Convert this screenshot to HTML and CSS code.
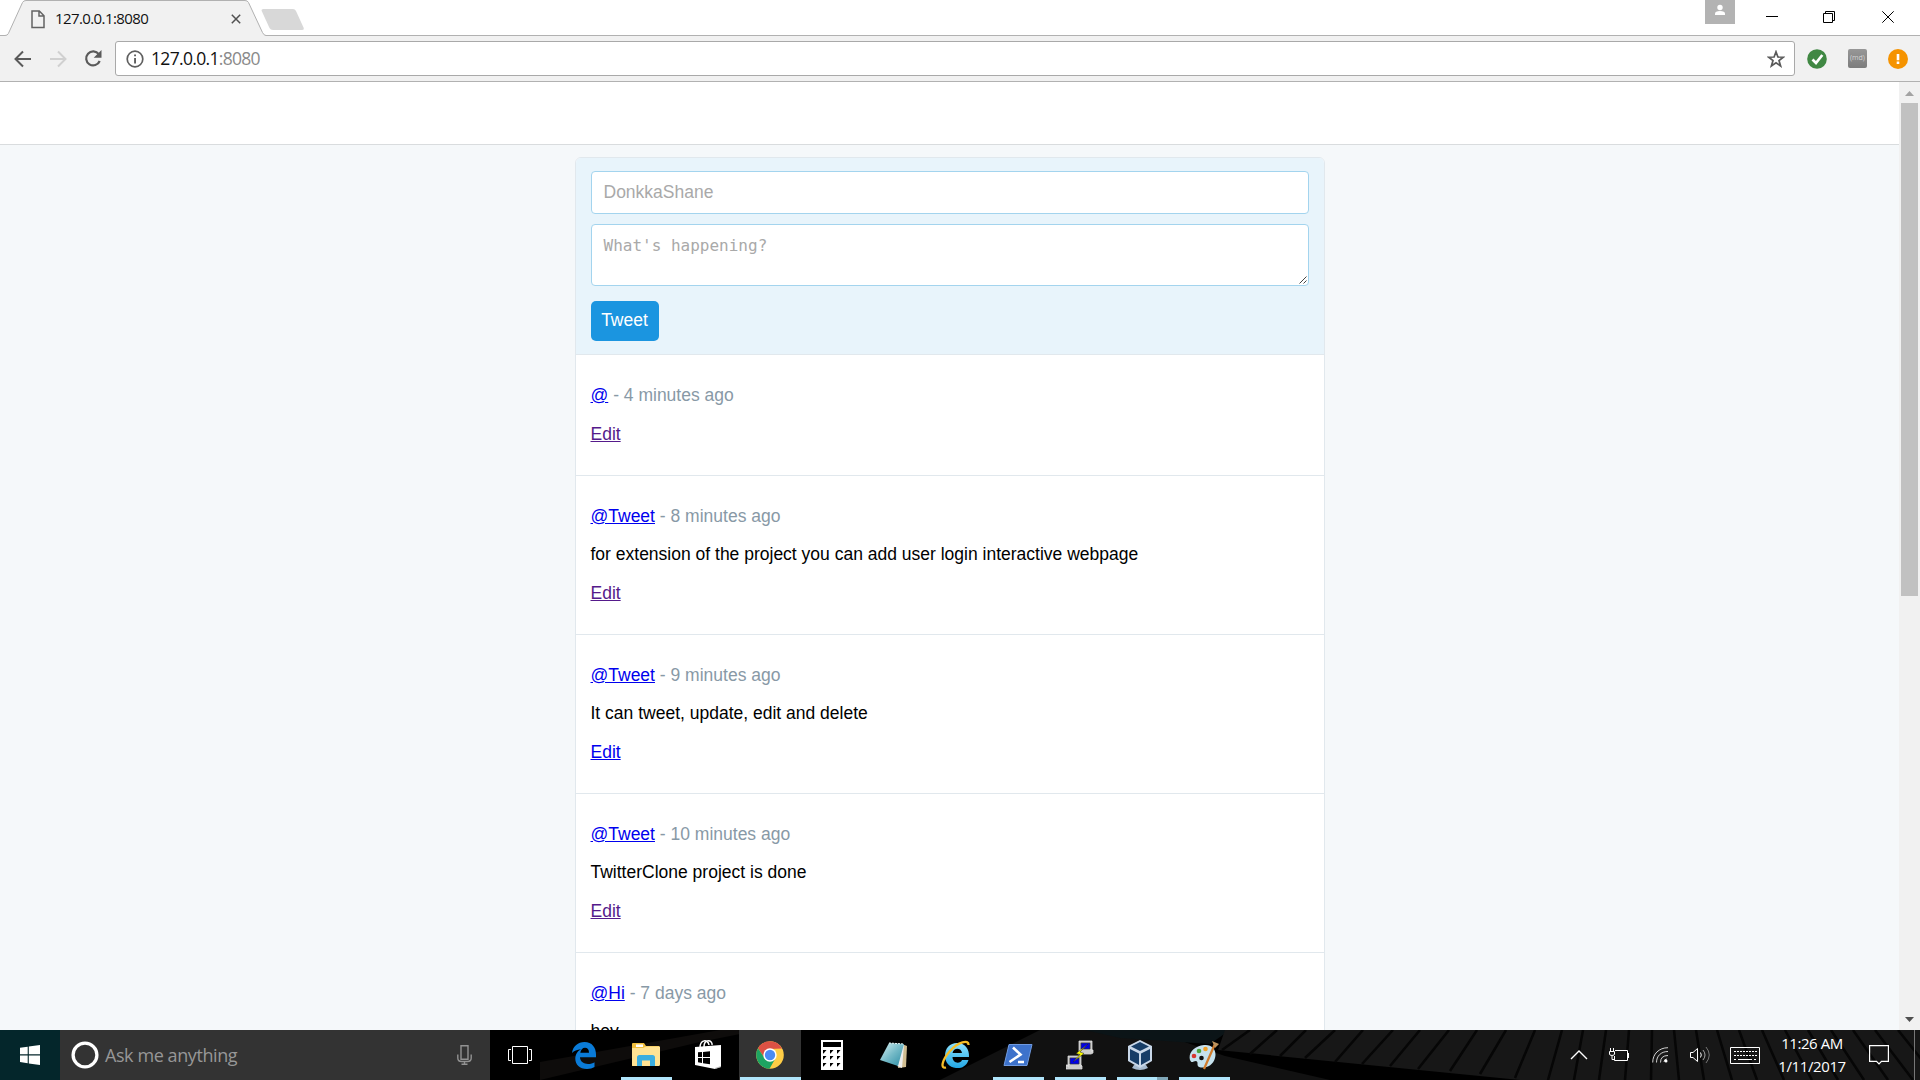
FILE: index.html
```html
<!DOCTYPE html>
<html lang="en">
<head>
<meta charset="utf-8">
<title>127.0.0.1:8080</title>
<link rel="stylesheet" href="styles.css">
</head>
<body>
<div class="screen">
  <header class="tabstrip">
    <div class="tab">
      <svg class="tab-shape" width="312" height="36" viewBox="0 0 312 36">
        <path d="M0 36V35.5H5Q7.5 35.5 8.4 33.5L22.5 2.5Q23.5.5 26 .5H245Q247.500 .5 248.500 2.500L262.500 32.500Q264 35.500 266 35.500V36Z" fill="#f1f1f1"/>
        <path d="M0 35.500H5Q7.500 35.500 8.400 33.500L22.500 2.500Q23.500.5 26 .5H245Q247.500.5 248.500 2.500L262.500 32.500Q264 35.500 266 35.500H312" fill="none" stroke="#b1b1b1"/>
        <path d="M263.500 9H293Q295 9 296 11L303.500 27.500Q304.500 30 302 30H273Q270.500 30 269.500 28L261.700 11Q261 9 263.500 9Z" fill="#d8d8d8"/>
      </svg>
      <svg class="tab-file" width="14" height="19" viewBox="0 0 14 19" fill="none" stroke="#636363" stroke-width="1.500"><path d="M1 1H8.300L13 5.700V17.500H1ZM8 1V6H13"/></svg>
      <span class="tab-title">127.0.0.1:8080</span>
      <svg class="tab-close" width="10" height="10" viewBox="0 0 10 10" stroke="#505050" stroke-width="1.500"><path d="M.8.8 9.200 9.200M9.200.8.8 9.200"/></svg>
    </div>
    <div class="window-buttons">
      <svg class="profile" width="30" height="24" viewBox="0 0 30 24"><path fill="#b3b3b3" d="M0 0H30V24H0Z"/><circle cx="15" cy="7.500" r="2.700" fill="#fff"/><path fill="#fff" d="M10 15V13.500Q10 11 15 11T20 13.500V15Z"/></svg>
      <svg width="12" height="12" viewBox="0 0 12 12"><path d="M0 5.500H12" stroke="#000"/></svg>
      <svg width="12" height="12" viewBox="0 0 12 12" fill="none" stroke="#000"><path d="M.5 2.500H9.500V11.500H.5ZM2.500 2.500V.5H11.500V9.500H9.500"/></svg>
      <svg width="12" height="12" viewBox="0 0 12 12" stroke="#000"><path d="M.3.3 11.700 11.700M11.700.3.3 11.700"/></svg>
    </div>
  </header>

  <div class="toolbar">
    <div class="nav">
      <svg width="18" height="18" viewBox="0 0 18 18" fill="none" stroke="#5a5a5a" stroke-width="2"><path d="M17 9H2M9 1.500 1.500 9 9 16.500"/></svg>
      <svg width="18" height="18" viewBox="0 0 18 18" fill="none" stroke="#d0d0d0" stroke-width="2"><path d="M1 9H16M9 1.500 16.500 9 9 16.500"/></svg>
      <svg width="18" height="18" viewBox="0 0 18 18"><path d="M14.800 4.200A7 7 0 1 0 15.700 11" fill="none" stroke="#5a5a5a" stroke-width="2.200"/><path d="M17.500 0V7.800H9.700Z" fill="#5a5a5a"/></svg>
    </div>
    <div class="omnibox">
      <svg width="18" height="18" viewBox="0 0 18 18"><circle cx="9" cy="9" r="7.800" fill="none" stroke="#5f5f5f" stroke-width="1.700"/><path d="M8.100 4.500H10V6.300H8.100ZM8.100 8H10V13.400H8.100Z" fill="#5f5f5f"/></svg>
      <span class="url">127.0.0.1<span class="port">:8080</span></span>
      <svg class="star" width="18" height="18" viewBox="0 0 18 18"><path d="M9 1.800 10.900 7 16.300 7.200 12 10.500 13.600 15.900 9 12.700 4.400 15.900 6 10.500 1.700 7.200 7.100 7Z" fill="none" stroke="#5a5a5a" stroke-width="1.700"/></svg>
    </div>
    <div class="extensions">
      <svg width="20" height="20" viewBox="0 0 20 20"><circle cx="10" cy="10" r="9.800" fill="#408843"/><path d="M5.500 10.500 9 14 15.300 6" fill="none" stroke="#fff" stroke-width="2.700"/></svg>
      <span class="md-badge">(md)</span>
      <svg width="20" height="20" viewBox="0 0 20 20"><circle cx="10" cy="10" r="10" fill="#f59300"/><path d="M8.700 5H11.300V11.300H8.700ZM8.700 12.600H11.300V15H8.700Z" fill="#fff"/></svg>
    </div>
  </div>

  <div class="viewport">
    <main class="page">
      <div class="navbar"></div>
      <section class="feed">
        <form class="compose">
          <input class="field" type="text" placeholder="DonkkaShane">
          <div class="message">
            <textarea class="field" placeholder="What's happening?"></textarea>
            <svg class="grip" width="8" height="8" viewBox="0 0 8 8" stroke="#444" stroke-width="1"><path d="M.5 7.500 7.500.5M4.500 7.500 7.500 4.500"/></svg>
          </div>
          <button class="send" type="button">Tweet</button>
        </form>
        <article class="tweet">
          <p class="meta"><a href="#user">@</a> - 4 minutes ago</p>
          <p class="actions"><a class="seen" href="#edit">Edit</a></p>
        </article>
        <article class="tweet">
          <p class="meta"><a href="#user">@Tweet</a> - 8 minutes ago</p>
          <p>for extension of the project you can add user login interactive webpage</p>
          <p class="actions"><a class="seen" href="#edit">Edit</a></p>
        </article>
        <article class="tweet">
          <p class="meta"><a href="#user">@Tweet</a> - 9 minutes ago</p>
          <p>It can tweet, update, edit and delete</p>
          <p class="actions"><a href="#edit">Edit</a></p>
        </article>
        <article class="tweet">
          <p class="meta"><a href="#user">@Tweet</a> - 10 minutes ago</p>
          <p>TwitterClone project is done</p>
          <p class="actions"><a class="seen" href="#edit">Edit</a></p>
        </article>
        <article class="tweet">
          <p class="meta"><a href="#user">@Hi</a> - 7 days ago</p>
          <p>hey</p>
        </article>
      </section>
    </main>
    <div class="scrollbar">
      <svg width="9" height="5" viewBox="0 0 9 5"><path d="M0 5 4.500 0 9 5Z" fill="#a3a3a3"/></svg>
      <div class="thumb"></div>
      <svg width="9" height="5" viewBox="0 0 9 5"><path d="M0 0H9L4.500 5Z" fill="#505050"/></svg>
    </div>
  </div>

  <footer class="taskbar">
    <svg class="wood" width="1430" height="50" viewBox="490 0 1430 50">
      <path fill="#000" d="M490 0H1920V50H490Z"/>
      <path fill="#0e0c0b" d="M540 32 720 0H760L700 12 540 50Z"/>
      <path fill="#111" d="M940 50 1040 0H1150L1225 26 1330 50Z"/>
      <path fill="#0b1417" d="M1085 0H1230L1210 14 1120 8Z"/>
      <path fill="#171717" d="M1225 0H1920V50H1520L1218 20Z"/>
      <path fill="none" stroke="#060606" stroke-width="2.500" d="M1250 0 1222 20M1277 0 1250 24M1306 0 1280 26M1335 0 1305 28M1363 0 1335 32M1393 0 1362 34M1420 0 1390 36M1449 0 1418 39M1477 0 1450 41M1506 0 1480 44M1535 0 1515 48M1562 0 1548 50M1583 0 1574 50M1606 0 1599 50M1629 0 1625 50M1652 0 1651 50M1674 0 1679 50M1696 0 1704 50M1717 0 1732 50M1739 0 1757 50M1762 0 1784 50M1785 0 1812 50M1808 0 1838 50M1831 0 1864 50M1853 0 1888 50M1875 0 1913 50M1898 0 1938 50"/>
    </svg>
    <div class="start"><svg width="20" height="20" viewBox="0 0 20 20" fill="#fff"><path d="M0 2.800 7.700 1.700V9.200H0ZM8.800 1.500 20 0V9.200H8.800ZM0 10.400H7.700V18.200L0 17ZM8.800 10.400H20V20L8.800 18.400Z"/></svg></div>
    <div class="search">
      <svg width="28" height="28" viewBox="0 0 28 28"><circle cx="14" cy="14" r="11.900" fill="none" stroke="#fff" stroke-width="3.300"/></svg>
      <span class="search-text">Ask me anything</span>
      <svg width="15" height="20" viewBox="0 0 15 20" fill="none" stroke="#929292" stroke-width="1.400"><path d="M4 .7H11V14.300H4ZM.8 9.500V13Q.8 16.500 4.500 16.500H10.500Q14.200 16.500 14.200 13V9.500M7.500 16.500V19.300M4.500 19.300H10.500"/></svg>
    </div>
    <div class="apps">
      <div class="app task-view"><svg width="26" height="20" viewBox="0 0 26 20" fill="none" stroke="#fff"><path d="M5.500 1.500H20.500V18.500H5.500ZM4 4.500H1.500V15.500H4M22 4.500H24.500V15.500H22"/></svg></div>
      <div class="app"><svg width="26" height="28" viewBox="0 0 26 28"><path fill="#0a7bd8" d="M1 12C2 5 7 1 13.500 1C21 1 25 6.500 25 13.500V16.300H9C9.300 21 13 23 17 23C19.500 23 22 22.200 23.500 21.200V26C21.500 27.300 19 28 16 28C8.500 28 4.300 23.500 4.300 17.800C4.300 13.500 6.700 10 10 8.300C6 8.600 3 9.800 1 12ZM9.300 11.700H18C18 8.500 16.500 6.700 14 6.700C11.500 6.700 9.700 8.700 9.300 11.700Z"/></svg></div>
      <div class="app open"><svg width="28" height="28" viewBox="0 0 28 28"><path fill="#f0bf3d" d="M0 3Q0 2 1 2H12L14 5H27V25H0Z"/><path fill="#fff" d="M4 3.500H11V6H4Z"/><path fill="#ffe394" d="M0 7H11L14 5.500H28V23.500Q28 25 26.500 25H1Q0 25 0 23.500Z"/><path fill="#3baee0" d="M5 25V16.500Q5 14 7.500 14H20.500Q23 14 23 16.500V25H18V19.500H10V25Z"/></svg></div>
      <div class="app"><svg width="28" height="32" viewBox="0 0 28 32"><path d="M6 9C6 0 14 0 15 6M10 8C10-1 19 1 18 6" fill="none" stroke="#fff" stroke-width="1.500"/><path fill="#fff" d="M1 8 27 6V28L21 30 1 26Z"/><path fill="#000" d="M4 13.300 8 13V18H4ZM9 13 16 12.200V18H9ZM4 19H8V24L4 23.300ZM9 19H16V25.300L9 24.200Z"/><path d="M21 29.500 27 27.500" stroke="#999" stroke-width=".7"/></svg></div>
      <div class="app open active"><svg width="28" height="28" viewBox="0 0 28 28"><circle cx="14" cy="14" r="13.800" fill="#ffcd46"/><path fill="#dd5144" d="M2 7.200A13.800 13.800 0 0 1 26 7.500L14 8 8.500 17Z"/><path fill="#1da462" d="M2 7.200A13.800 13.800 0 0 0 13.500 27.800L19.500 17.200 14 20 8.500 17Z"/><circle cx="14" cy="14" r="6.700" fill="#fff"/><circle cx="14" cy="14" r="5.200" fill="#4b8bf4"/></svg></div>
      <div class="app"><svg width="22" height="30" viewBox="0 0 22 30"><path fill="#fff" d="M0 0H22V30H0Z"/><path fill="#000" d="M2 2H20V7H2ZM2 10H5.500L2.500 13.500H2ZM9 10H12.500L9.500 13.500H9ZM16 10H19.500L16.500 13.500H16ZM2 16H5.500L2.500 19.500H2ZM9 16H12.500L9.500 19.500H9ZM16 16H19.500L16.500 19.500H16ZM2 23H5.500L2.500 26.500H2ZM9 23H12.500L9.500 26.500H9ZM16 23H19.500L16.500 26.500H16Z"/></svg></div>
      <div class="app"><svg width="28" height="28" viewBox="0 0 28 28"><defs><linearGradient id="pad" x2="1" y2="1"><stop stop-color="#d8f2f4"/><stop offset=".5" stop-color="#75bac7"/><stop offset="1" stop-color="#2a8ba3"/></linearGradient></defs><path fill="#d0bd91" d="M22 3 27 5 26 26 18 27Z"/><path fill="#eee" d="M20 4 24 4 22 27 17 25Z"/><path fill="url(#pad)" d="M9 2 24 3 18 25 0 19Z"/><path fill="none" stroke="#e8f7f7" stroke-dasharray="2 1" d="M9 2 24 3"/></svg></div>
      <div class="app"><svg width="30" height="30" viewBox="0 0 30 30"><defs><linearGradient id="ie" x2="0" y2="1"><stop stop-color="#8ce2ff"/><stop offset="1" stop-color="#22a7e4"/></linearGradient></defs><path fill="url(#ie)" d="M16 3C24 3 28.500 9 28 17H11.500C11.800 24 19.500 24 21 20H27.500C25 27 20 28.500 15 28C8 27.500 4 22 4 16C4 8 9 3 16 3ZM11.500 13H21C20.500 7.500 12.500 7 11.500 13Z"/><path d="M27.500 5C28-1 17 2 9 11C1 20-1 29 5 27.500" fill="none" stroke="#f5bd28" stroke-width="2.300"/></svg></div>
      <div class="app open"><svg width="30" height="24" viewBox="0 0 30 24"><path fill="#3d72cb" stroke="#6f9ae0" d="M6 1.500H29L24 22.500H1Z"/><path fill="none" stroke="#fff" stroke-width="2.600" d="M10 4.500 17.500 11.500 6.500 19M15 19H21"/></svg></div>
      <div class="app open"><svg width="28" height="30" viewBox="0 0 28 30"><path fill="#bbb" stroke="#eee" stroke-width=".7" d="M13 1H26V12H13ZM14 10H27V13L25 14H12ZM2 16H15V27H2ZM0 25H15L16 26V29H0Z"/><path fill="#0000e6" stroke="#333" stroke-width=".7" d="M15 3H24V9H15ZM4 18H13V24H4Z"/><path fill="#ff0" stroke="#222" stroke-width=".5" d="M22 4 10 13.500 14 14.500 7 22 18 13.500 14 12Z"/></svg></div>
      <div class="app open stacked"><svg width="26" height="30" viewBox="0 0 26 30"><path fill="#a7bbd0" d="M7 25H19L21 28Q13 32 5 28Z"/><path fill="#c8d7e8" d="M13 0 25 6V21L13 28 1 21V6Z"/><path fill="#173d67" d="M13 2 22 6.500 13 11 4 6.500ZM3 9 12 13.500V25L3 20ZM23 9 14 13.500V25L23 20Z"/></svg></div>
      <div class="app open"><svg width="30" height="30" viewBox="0 0 30 30"><path fill="#c6e2ee" d="M15 5C24 4 28 11 26 18C24 26 16 29 10 27C7 25 10 22 7 21C4 21 3 24 1 20C-1 13 5 6 15 5Z"/><circle cx="12.500" cy="18" r="2.300" fill="#111"/><circle cx="5" cy="16" r="2.300" fill="#d73731"/><circle cx="10" cy="11" r="2.300" fill="#4ba33c"/><circle cx="16.500" cy="9" r="2.300" fill="#f1a22b"/><path d="M25.500 5 15 29" stroke="#d17c2d" stroke-width="2.300"/><path d="M23 1 30 4 26 8Z" fill="#bd935d"/></svg></div>
    </div>
    <div class="tray">
      <svg class="chevron" width="18" height="10" viewBox="0 0 18 10" fill="none" stroke="#fff" stroke-width="1.400"><path d="M1 9 9 1 17 9"/></svg>
      <svg class="battery" width="20" height="14" viewBox="0 0 20 14" fill="none" stroke="#fff"><path d="M6 2.500H18.500V12.500H5.500V8M19.500 5V10M.5 3.500H5.500V6Q5.500 7.500 3 7.500T.5 6ZM1.500 3V0M4.500 3V0M3 8V11.500H5.500"/></svg>
      <svg class="wifi" width="17" height="16" viewBox="0 0 17 16" fill="none" stroke="#fff"><path d="M.7 15.500C.7 7 7 .7 16 .7M4.500 15.500C4.500 9 9 4.500 16 4.500M8.500 15.500Q8.500 8.500 16 8.500M12 15Q12 12 15 12" opacity=".8"/><circle cx="14" cy="14" r="1.500" fill="#fff" stroke="none"/></svg>
      <svg class="volume" width="20" height="18" viewBox="0 0 20 18" fill="none" stroke="#fff"><path d="M.5 6.500H3L7.500 2.500V15.500L3 11.500H.5Z"/><path d="M10.500 6.500Q12 9 10.500 11.500"/><path d="M13 4Q17 9 13 14" opacity=".6"/><path d="M16 1Q22.500 9 16 17" opacity=".4"/></svg>
      <svg class="keyboard" width="30" height="17" viewBox="0 0 30 17" fill="none" stroke="#fff"><path d="M.5.5H29.500V16.500H.5Z"/><path d="M4 4.500H27M4 8.500H27" stroke-dasharray="2 1"/><path d="M4 12.500H6M8 12.500H22M24 12.500H26"/></svg>
      <div class="clock"><span class="time">11:26 AM</span><span class="date">1/11/2017</span></div>
      <svg class="notes" width="20" height="20" viewBox="0 0 20 20" fill="none" stroke="#fff" stroke-width="1.200"><path d="M.6.600H19.400V16.400H12.500L10 19 7.500 16.400H.6Z"/></svg>
      <div class="peek"></div>
    </div>
  </footer>
</div>
</body>
</html>
```
FILE: styles.css
```css
* { box-sizing: border-box; }
body { margin: 0; overflow: hidden; }
svg { display: block; flex: none; }

.screen {
  display: flex;
  flex-direction: column;
  width: 1920px;
  height: 1080px;
  overflow: hidden;
  background: #fff;
  font-family: "Open Sans", "Noto Sans", sans-serif;
}

/* Browser frame */
.tabstrip {
  display: flex;
  justify-content: space-between;
  height: 36px;
  box-shadow: inset 0 -1px #b1b1b1;
}
.tab {
  position: relative;
  display: flex;
  align-items: flex-start;
  width: 312px;
  padding: 10px 0 0 31px;
}
.tab-shape { position: absolute; left: 0; top: 0; }
.tab-file { position: relative; }
.tab-title {
  position: relative;
  width: 176px;
  margin-left: 10px;
  margin-top: -2px;
  font-size: 15px;
  line-height: 21px;
  letter-spacing: -0.6px;
  color: #111;
}
.tab-close { position: relative; margin-top: 4px; }
.window-buttons { display: flex; gap: 46px; padding: 11px 26px 0 0; }
.window-buttons svg:nth-child(3) { margin: 0 1px 0 -1px; }
.window-buttons .profile { margin-top: -11px; margin-right: -15px; }

.toolbar {
  display: flex;
  align-items: center;
  height: 46px;
  padding: 0 12px 0 14px;
  background: #f1f1f1;
  border-bottom: 1px solid #b1b1b1;
}
.nav { display: flex; gap: 17px; width: 101px; }
.omnibox {
  display: flex;
  align-items: center;
  width: 1680px;
  height: 35px;
  padding: 0 9px 0 10px;
  background: #fff;
  border: 1px solid #a9a9a9;
  border-radius: 3px;
}
.url {
  margin: -1px 0 0 7px;
  font-size: 17.5px;
  line-height: 24px;
  letter-spacing: -0.68px;
  color: #111;
}
.port { color: #8a8a8a; }
.star { margin-left: auto; }
.extensions { display: flex; align-items: center; gap: 21px; margin-left: 12px; }
.md-badge {
  width: 19px;
  height: 19px;
  border-radius: 2px;
  background: linear-gradient(#979797, #7c7c7c);
  color: #d4d4d4;
  font-size: 7px;
  line-height: 18px;
  text-align: center;
}

/* Web page */
.viewport { display: flex; height: 948px; overflow: hidden; }
.page {
  width: 1899px;
  background: #f5f8fa;
  font: 17.5px/20px "Liberation Sans", Arial, sans-serif;
}
.navbar { height: 63px; background: #fff; border-bottom: 1px solid #d9dcde; }
.feed {
  width: 750px;
  margin: 12px auto 0;
  background: #fff;
  border: 1px solid #e1e8ed;
  border-radius: 6px 6px 0 0;
}
.compose {
  display: flex;
  flex-direction: column;
  align-items: flex-start;
  height: 196px;
  padding: 13px 15px 0;
  background: #e8f4fb;
  border-radius: 5px 5px 0 0;
}
.field {
  display: block;
  width: 718px;
  margin: 0;
  border: 1px solid #a3d4ee;
  border-radius: 4px;
  background: #fff;
  outline: none;
}
.field::placeholder { color: #a9a9a9; opacity: 1; }
input.field { height: 43px; padding: 0 12px; font: inherit; }
textarea.field {
  height: 62px;
  padding: 11px 12px;
  overflow: hidden;
  resize: none;
  font: 16px/20px "DejaVu Sans Mono", monospace;
}
.message { position: relative; margin-top: 10px; }
.grip { position: absolute; right: 2px; bottom: 2px; }
.send {
  width: 68px;
  height: 40px;
  margin-top: 15px;
  padding: 0 0 2px;
  border: 0;
  border-radius: 5px;
  background: #1b95e0;
  color: #fff;
  font: inherit;
}
.tweet {
  display: flex;
  flex-direction: column;
  gap: 18px;
  padding: 30px 15px 31px;
  border-top: 1px solid #e1e8ed;
}
.tweet p { margin: 0; }
.tweet .actions { padding-top: 1px; }
.tweet a { color: #0000ee; }
.tweet a.seen { color: #551a8b; }
.meta { color: #8899a6; }

.scrollbar {
  display: flex;
  flex-direction: column;
  align-items: center;
  width: 21px;
  padding: 9px 0 8px;
  background: #f1f1f1;
}
.thumb { width: 17px; height: 493px; margin: 7px 0 auto; background: #c1c1c1; }

/* Taskbar */
.taskbar {
  position: relative;
  z-index: 0;
  display: flex;
  height: 50px;
  color: #fff;
  background: #000;
}
.wood { position: absolute; right: 0; top: 0; z-index: -1; }
.start { display: flex; align-items: center; justify-content: center; width: 60px; background: #04262b; }
.search {
  display: flex;
  align-items: center;
  width: 430px;
  padding: 0 18px 0 11px;
  background: #333;
}
.search-text {
  flex: 1;
  margin-left: 6px;
  font-size: 18px;
  letter-spacing: -0.42px;
  color: #979797;
}
.apps { display: flex; margin-left: 1px; }
.app { display: flex; align-items: center; justify-content: center; width: 62px; }
.task-view { padding-right: 4px; }
.open { background: linear-gradient(#b0e5fb, #b0e5fb) 50% 100% / 51px 3px no-repeat; }
.active { background: linear-gradient(#b0e5fb, #b0e5fb) 50% 100% / 61px 3px no-repeat, #333; }
.stacked {
  padding-right: 4px;
  background: linear-gradient(90deg, #b0e5fb 40px, #7fa6b7 40px) 50% 100% / 51px 3px no-repeat;
}
.tray { display: flex; align-items: center; margin-left: auto; }
.battery { margin-left: 21px; }
.wifi { margin-left: 23px; }
.volume { margin-left: 21px; }
.keyboard { margin-left: 20px; }
.clock {
  display: flex;
  flex-direction: column;
  align-items: center;
  width: 74px;
  margin-left: 15px;
  font-size: 15px;
  line-height: 23px;
}
.time { letter-spacing: -0.45px; }
.date { letter-spacing: -0.38px; }
.notes { margin-left: 20px; }
.peek { width: 6px; height: 50px; margin-left: 25px; border-left: 1px solid #777; }
```
